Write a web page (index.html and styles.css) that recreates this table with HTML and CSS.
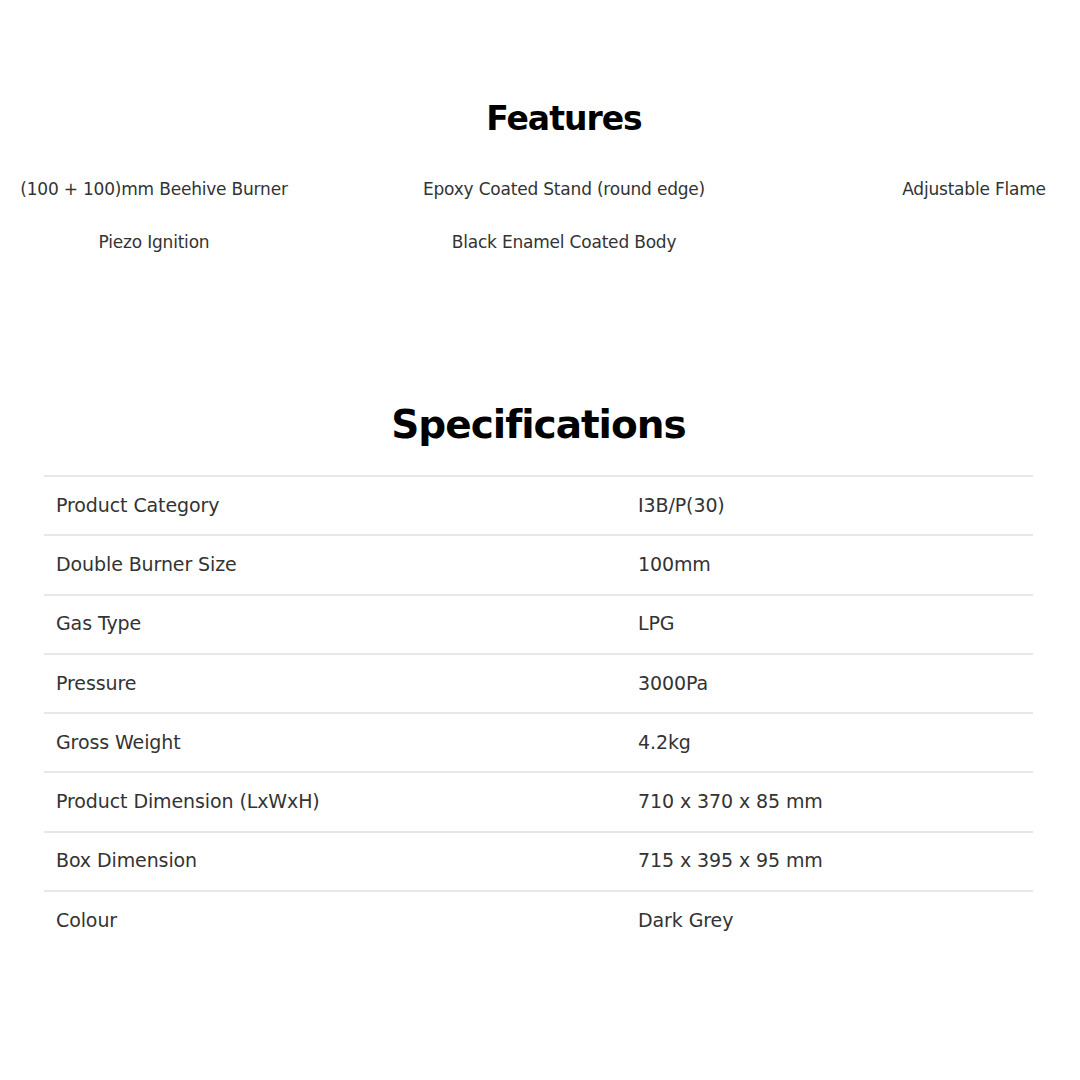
FILE: index.html
```html
<!DOCTYPE html>
<html lang="en">
<head>
<meta charset="utf-8">
<title>Features and Specifications</title>
<link rel="stylesheet" href="styles.css">
</head>
<body>
<div class="page">
  <section class="features">
    <h2 class="heading heading-features">Features</h2>
    <ul class="feature-grid">
      <li>(100 + 100)mm Beehive Burner</li>
      <li>Epoxy Coated Stand (round edge)</li>
      <li>Adjustable Flame</li>
      <li>Piezo Ignition</li>
      <li>Black Enamel Coated Body</li>
    </ul>
  </section>
  <section class="specs">
    <h2 class="heading heading-specs">Specifications</h2>
    <table class="spec-table">
      <tr><td class="label">Product Category</td><td class="value">I3B/P(30)</td></tr>
      <tr><td class="label">Double Burner Size</td><td class="value">100mm</td></tr>
      <tr><td class="label">Gas Type</td><td class="value">LPG</td></tr>
      <tr><td class="label">Pressure</td><td class="value">3000Pa</td></tr>
      <tr><td class="label">Gross Weight</td><td class="value">4.2kg</td></tr>
      <tr><td class="label">Product Dimension (LxWxH)</td><td class="value">710 x 370 x 85 mm</td></tr>
      <tr><td class="label">Box Dimension</td><td class="value">715 x 395 x 95 mm</td></tr>
      <tr><td class="label">Colour</td><td class="value">Dark Grey</td></tr>
    </table>
  </section>
</div>
</body>
</html>
```
FILE: styles.css
```css
html, body {
  margin: 0;
  padding: 0;
  background: #ffffff;
}
body {
  width: 1080px;
  height: 1080px;
  overflow: hidden;
  font-family: "DejaVu Sans", "Liberation Sans", sans-serif;
  color: #333333;
}
.page {
  width: 1080px;
}
.features {
  width: 1128px;
  padding-top: 95px;
}
.heading {
  margin: 0;
  text-align: center;
  font-family: "DejaVu Sans", sans-serif;
  font-weight: bold;
  color: #000000;
  letter-spacing: -1px;
}
.heading-features {
  font-size: 33px;
  line-height: 48px;
}
.feature-grid {
  list-style: none;
  margin: 31px 0 0 0;
  padding: 0;
  display: grid;
  grid-template-columns: 308px 308px 308px;
  column-gap: 102px;
  row-gap: 23px;
  text-align: center;
  font-size: 17px;
  line-height: 30px;
  letter-spacing: -0.2px;
}
.specs {
  padding: 142px 47px 0 44px;
}
.heading-specs {
  font-size: 39px;
  line-height: 52px;
  margin-bottom: 24px;
}
.spec-table {
  width: 100%;
  border-collapse: collapse;
  font-size: 19px;
  letter-spacing: -0.1px;
}
.spec-table tr {
  border-top: 2px solid #e8e8e8;
}
.spec-table td {
  height: 59.3px;
  padding: 0 12px 2px 12px;
  box-sizing: border-box;
  vertical-align: middle;
}
.spec-table .label {
  width: 582px;
}
```
